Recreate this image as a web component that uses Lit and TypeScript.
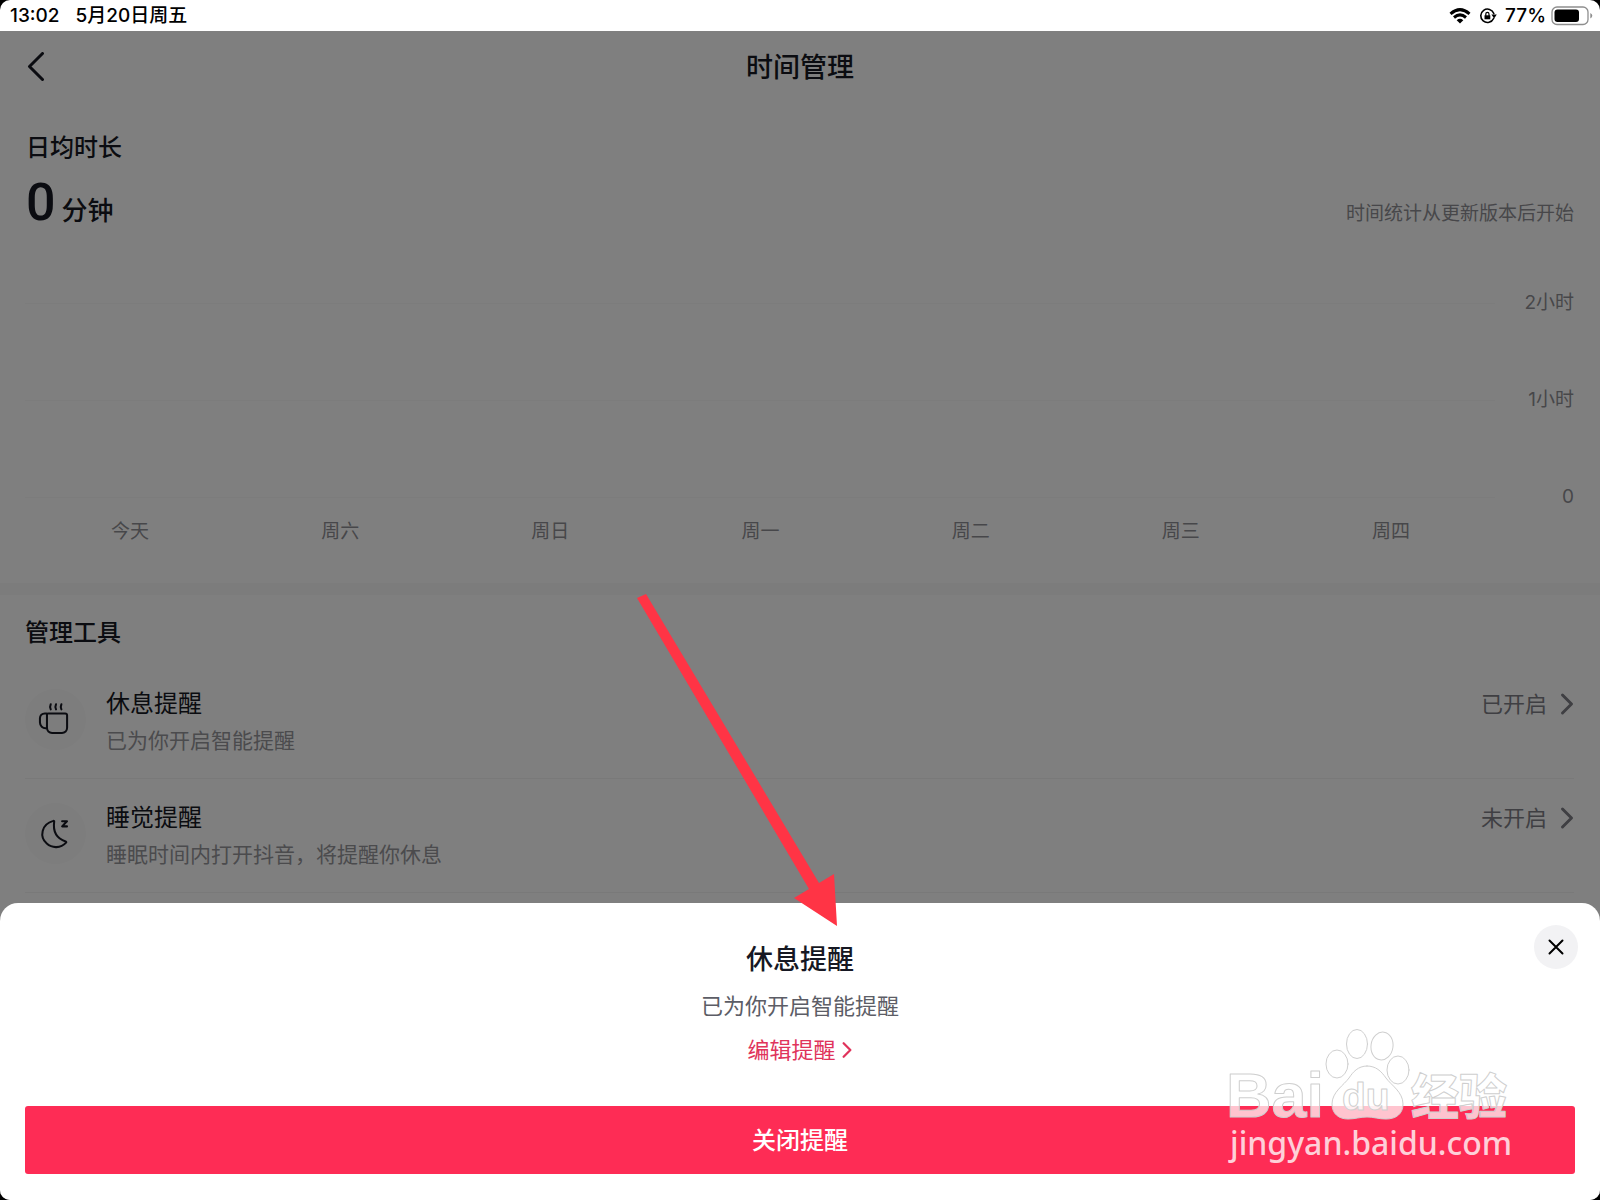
import { LitElement, html, css, svg } from "lit";
import { customElement, state } from "lit/decorators.js";

interface Tool {
  id: string;
  title: string;
  note: string;
  status: string;
}

const DAYS = ["今天", "周六", "周日", "周一", "周二", "周三", "周四"];
const LEVELS = ["2小时", "1小时", "0"];
const TOOLS: Tool[] = [
  { id: "rest", title: "休息提醒", note: "已为你开启智能提醒", status: "已开启" },
  { id: "sleep", title: "睡觉提醒", note: "睡眠时间内打开抖音，将提醒你休息", status: "未开启" },
];

const mugIcon = svg`<svg viewBox="0 0 60 60" class="tool-svg" aria-hidden="true">
  <path d="M22.500 24h17a1.900 1.900 0 0 1 1.900 1.900v12.300a5 5 0 0 1-5 5h-9.800a5 5 0 0 1-5-5v-13.300a.9.9 0 0 1 .9-.9z"/>
  <path d="M21 24h-1.500a4.800 4.800 0 0 0-4.800 4.800v4.200a5.500 5.500 0 0 0 6 5.500"/>
  <path d="M25.300 15q-1.200 2.600 0 5M30.500 15q-1.200 2.600 0 5M35.800 15q-1.200 2.600 0 5"/>
</svg>`;

const moonIcon = svg`<svg viewBox="0 0 60 60" class="tool-svg" aria-hidden="true">
  <path d="M27.800 17.600c.6-.2 1.100.2.900.8-1.300 9.500 2.500 16.600 11.300 19.400.6.200.8.800.4 1.200-5.200 5.600-13.600 5.800-19 .9-7.400-6.600-5.400-19 6.400-22.300z"/>
  <path d="M36.500 18h4.800l-4.800 5h4.800"/>
</svg>`;

const chevron = svg`<svg viewBox="0 0 14 24" class="chevron" aria-hidden="true"><path d="M2.500 3l9 9-9 9"/></svg>`;

@customElement("app-root")
export class AppRoot extends LitElement {
  @state() private sheetOpen = true;

  static styles = css`
    :host {
      display: block;
      background: #000;
      color: #161823;
      font-family: Inter, "Noto Sans CJK SC", sans-serif;
      font-size: 19px;
    }
    * { box-sizing: border-box; }
    h1, h2, p, ul, ol { margin: 0; padding: 0; font-weight: inherit; }
    ul, ol { list-style: none; }
    button { border: 0; padding: 0; background: none; font: inherit; color: inherit; cursor: pointer; }
    svg { display: block; fill: none; stroke: currentColor; stroke-linecap: round; stroke-linejoin: round; }

    .screen {
      position: relative;
      display: flex;
      flex-direction: column;
      min-height: 100vh;
      border-radius: 10px;
      overflow: hidden;
      background: #fff;
    }
    .status {
      display: flex;
      align-items: center;
      justify-content: space-between;
      height: 31px;
      padding: 0 7px 0 10px;
      color: #000;
      font-weight: 500;
      line-height: 28px;
    }
    .status-side { display: flex; align-items: center; gap: 16px; }
    .status-icons { display: flex; align-items: center; gap: 8px; }
    .power { display: flex; align-items: center; gap: 5px; }
    .wifi { width: 22px; height: 16px; }
    .wifi-arc { stroke-width: 3; stroke-linecap: butt; }
    .lock { width: 18px; height: 18px; }
    .battery { width: 42px; height: 20px; }

    .page { position: relative; flex: 1; }
    .scrim { position: absolute; inset: 0; background: rgba(0, 0, 0, 0.5); }

    .nav {
      display: grid;
      grid-template-columns: 1fr auto 1fr;
      align-items: center;
      height: 72px;
      padding: 2px 26px 0;
    }
    .back { width: 20px; height: 32px; }
    .back svg { width: 20px; height: 32px; stroke-width: 3; }
    .nav-title { font-size: 27px; font-weight: 500; line-height: 40px; }

    .summary { padding: 27px 26px 0; }
    .label { font-size: 24px; font-weight: 500; line-height: 36px; }
    .total { display: flex; align-items: baseline; justify-content: space-between; height: 76px; line-height: 64px; margin-top: 5px; }
    .amount { display: flex; align-items: baseline; gap: 6px; font-size: 26px; font-weight: 500; }
    .number { font-family: Roboto, sans-serif; font-size: 52px; font-weight: 500; }
    .muted { color: #8f8f94; }

    .chart { padding: 42px 26px 0 25px; }
    .level { display: flex; align-items: center; height: 28px; margin-bottom: 69px; }
    .level:last-child { margin-bottom: 0; }
    .rule { flex: 1; height: 1px; background: #f8f8f9; }
    .level-label { width: 79px; text-align: right; line-height: 28px; }
    .days { display: flex; padding: 7px 78px 0 0; }
    .day { flex: 1; text-align: center; line-height: 28px; }
    .band { height: 12px; margin-top: 37px; background: #f8f8f8; }

    .tools { padding: 20px 26px 0 25px; }
    .list { padding-top: 14px; }
    .tool {
      display: flex;
      align-items: flex-start;
      gap: 20px;
      width: 100%;
      height: 114px;
      padding-top: 21px;
      border-bottom: 1px solid #f2f2f3;
      text-align: left;
    }
    .badge { width: 61px; height: 61px; margin-top: 3px; border-radius: 50%; background: #fafafa; }
    .tool-svg { width: 61px; height: 61px; stroke-width: 2; }
    .texts { flex: 1; display: flex; flex-direction: column; gap: 3px; }
    .tool-title { font-size: 24px; line-height: 36px; }
    .tool-note { font-size: 21px; line-height: 32px; color: #96969b; }
    .tool-status { display: flex; align-items: center; gap: 13px; font-size: 22px; line-height: 36px; color: #7f7f86; }
    .chevron { width: 14px; height: 24px; stroke-width: 3; }

    .sheet {
      position: absolute;
      left: 0;
      right: 0;
      bottom: 0;
      display: flex;
      flex-direction: column;
      align-items: center;
      padding: 37px 25px 26px;
      border-radius: 18px 18px 0 0;
      background: #fff;
    }
    .sheet-title { font-size: 27px; font-weight: 500; line-height: 40px; }
    .sheet-note { margin-top: 9px; font-size: 22px; line-height: 34px; color: #5c5d66; }
    .edit { display: flex; align-items: center; gap: 5px; margin-top: 10px; font-size: 22px; line-height: 34px; color: #e0335b; text-decoration: none; }
    .edit .chevron { width: 12px; height: 18px; stroke-width: 3; }
    .off { width: 100%; height: 68px; margin-top: 39px; padding-bottom: 4px; border-radius: 3px; background: #fe2c55; color: #fff; font-size: 24px; font-weight: 500; }
    .close { position: absolute; top: 22px; right: 22px; display: grid; place-items: center; width: 44px; height: 44px; border-radius: 50%; background: #f2f2f4; color: #000; }
    .close svg { width: 16px; height: 16px; stroke-width: 2; }

    .arrow { position: absolute; left: 636px; top: 594px; width: 202px; height: 334px; pointer-events: none; fill: #ff3445; stroke: none; }
    .mark { position: absolute; right: 80px; bottom: 30px; width: 300px; height: 150px; pointer-events: none; }
    .mark-shape, .mark-text { fill: #fff; fill-opacity: 0.72; stroke: #cfcfcf; stroke-width: 1; }
    .mark-latin { font: 700 63px "Liberation Sans", sans-serif; }
    .mark-du { font: 700 39px "Liberation Sans", sans-serif; }
    .mark-han { font: 900 48px "Noto Sans CJK SC", sans-serif; }
    .mark-url { font: 500 32px "Noto Sans", sans-serif; fill: #fff; fill-opacity: 0.78; stroke: none; }
  `;

  private close() {
    this.sheetOpen = false;
  }

  private open() {
    this.sheetOpen = true;
  }

  private renderStatus() {
    return html`<header class="status">
      <div class="status-side"><span>13:02</span><span>5月20日周五</span></div>
      <div class="status-icons">
        <svg class="wifi" viewBox="0 0 22 16">
          <path class="wifi-arc" d="M1.500 5.800q9.500-8.300 19 0M5 9.500q6-5.200 12 0"/>
          <path d="M7.700 12.200q3.300-2.700 6.600 0L11 15.500z" fill="currentColor" stroke="none"/>
        </svg>
        <svg class="lock" viewBox="0 0 18 18">
          <path d="M14.600 11.500A6.700 6.700 0 1 1 14.800 6.600" stroke-width="1.600"/>
          <path d="M12.400 7.600h5.400l-2.700 3.800z" fill="currentColor" stroke="none"/>
          <path d="M5.500 8.300h5.800v4H5.500z" fill="currentColor" stroke="none"/>
          <path d="M6.800 8.500V7a1.600 1.600 0 0 1 3.200 0v1.500" stroke-width="1.200"/>
        </svg>
        <span class="power">
          77%
          <svg class="battery" viewBox="0 0 42 20">
            <rect x="1" y="1" width="36" height="17.500" rx="5" stroke="#8e8e8e" stroke-width="1.300"/>
            <rect x="3.500" y="3.500" width="24.500" height="12.500" rx="3" fill="#000" stroke="none"/>
            <path d="M39.300 7v5.600q2-1 2-2.800t-2-2.800z" fill="#8e8e8e" stroke="none"/>
          </svg>
        </span>
      </div>
    </header>`;
  }

  private renderChart() {
    return html`<section class="chart muted">
        <ul>
          ${LEVELS.map((l) => html`<li class="level"><span class="rule"></span><span class="level-label">${l}</span></li>`)}
        </ul>
        <ol class="days">${DAYS.map((d) => html`<li class="day">${d}</li>`)}</ol>
      </section>
      <div class="band"></div>`;
  }

  private renderTools() {
    return html`<section class="tools">
      <h2 class="label">管理工具</h2>
      <div class="list">
        ${TOOLS.map(
          (t) => html`<button class="tool" @click=${this.open}>
            <span class="badge">${t.id === "rest" ? mugIcon : moonIcon}</span>
            <span class="texts">
              <span class="tool-title">${t.title}</span>
              <span class="tool-note">${t.note}</span>
            </span>
            <span class="tool-status">${t.status}${chevron}</span>
          </button>`
        )}
      </div>
    </section>`;
  }

  private renderSheet() {
    return html`<div class="scrim"></div>
      <section class="sheet" role="dialog" aria-labelledby="sheet-title">
        <h2 class="sheet-title" id="sheet-title">休息提醒</h2>
        <p class="sheet-note">已为你开启智能提醒</p>
        <a class="edit" href="#edit">编辑提醒${chevron}</a>
        <button class="off" @click=${this.close}>关闭提醒</button>
        <button class="close" aria-label="关闭" @click=${this.close}>
          <svg viewBox="0 0 16 16"><path d="M1.500 1.500l13 13M14.500 1.500l-13 13"/></svg>
        </button>
      </section>`;
  }

  private renderMark() {
    return html`<svg class="mark" viewBox="0 0 300 150">
      <text class="mark-text mark-latin" x="6" y="97">Bai</text>
      <g class="mark-shape">
        <ellipse cx="117" cy="44" rx="11" ry="14"/>
        <ellipse cx="137" cy="24" rx="10.500" ry="14.500"/>
        <ellipse cx="162" cy="26" rx="11" ry="14" transform="rotate(8 162 26)"/>
        <ellipse cx="178" cy="50" rx="11" ry="14"/>
        <path d="M147 46c-9 0-14 6-18 12-5 7-17 14-17 26 0 10 7 15 16 15 7 0 12-2 19-2s11 2 19 2c10 0 17-5 17-15 0-12-12-19-17-26-5-7-10-12-19-12z"/>
      </g>
      <text class="mark-text mark-du" x="122" y="90">du</text>
      <text class="mark-text mark-han" x="191" y="94">经验</text>
      <text class="mark-url" x="10" y="135">jingyan.baidu.com</text>
    </svg>`;
  }

  render() {
    return html`<div class="screen">
      ${this.renderStatus()}
      <main class="page">
        <nav class="nav">
          <button class="back" aria-label="返回"><svg viewBox="0 0 20 32"><path d="M16.500 1.500L3.500 14.500l13 13"/></svg></button>
          <h1 class="nav-title">时间管理</h1>
        </nav>
        <section class="summary">
          <h2 class="label">日均时长</h2>
          <div class="total">
            <p class="amount"><span class="number">0</span>分钟</p>
            <p class="muted">时间统计从更新版本后开始</p>
          </div>
        </section>
        ${this.renderChart()} ${this.renderTools()}
        ${this.sheetOpen ? this.renderSheet() : null}
      </main>
      <svg class="arrow" viewBox="0 0 202 334"><path d="M1 4L10 0 183 289 198 280 201 332 158 304 173 295z"/></svg>
      ${this.renderMark()}
    </div>`;
  }
}
